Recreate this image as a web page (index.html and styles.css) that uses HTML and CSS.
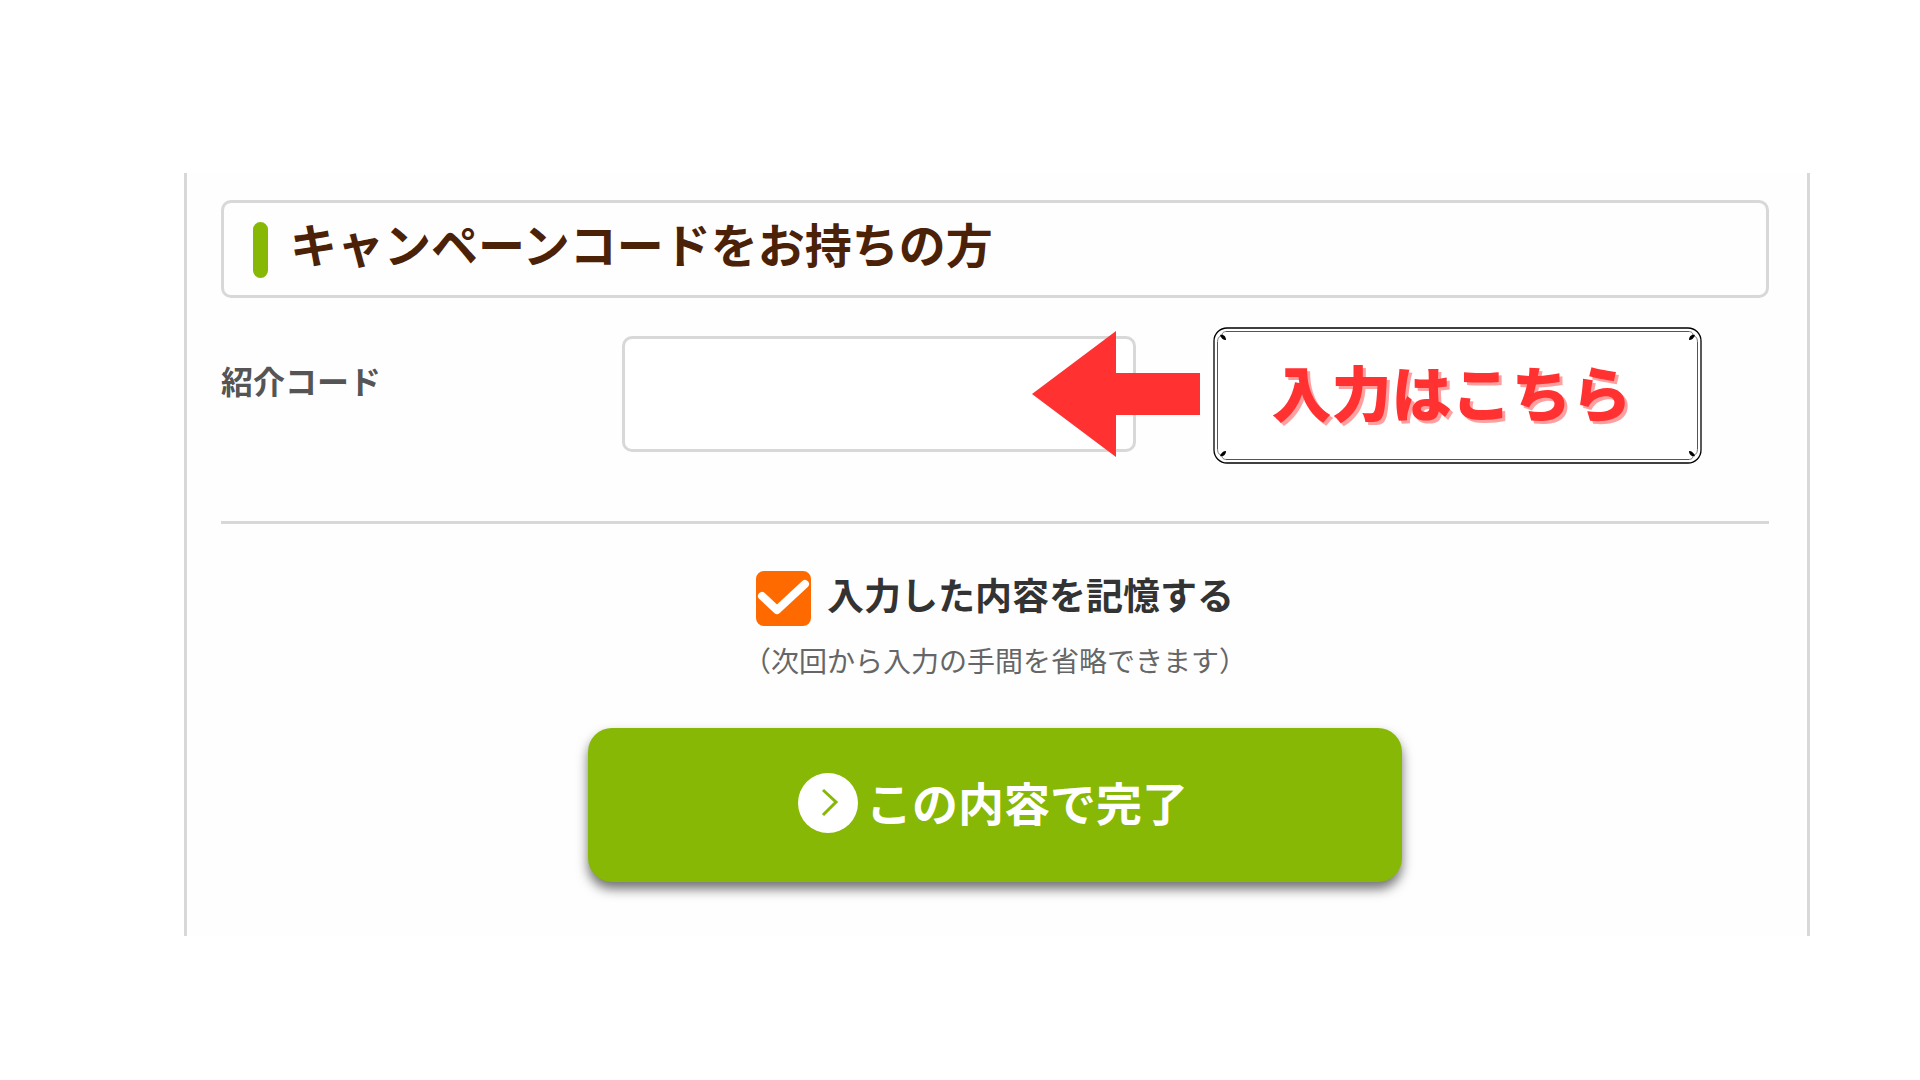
FILE: index.html
```html
<!DOCTYPE html>
<html lang="ja">
<head>
  <meta charset="UTF-8">
  <meta name="viewport" content="width=device-width, initial-scale=1.0">
  <title>キャンペーンコード</title>
  <link rel="stylesheet" href="styles.css">
</head>
<body>
  <form class="panel">
    <h1 class="panel-title">キャンペーンコードをお持ちの方</h1>

    <!-- Referral code -->
    <div class="code-row">
      <label class="code-label" for="code">紹介コード</label>
      <input class="code-input" type="text" id="code" name="code">
      <svg class="arrow" viewBox="0 0 168 126" aria-hidden="true">
        <path d="M0 63 84 0V42H168V84H84V126Z" fill="#ff3131"/>
      </svg>
      <div class="note">
        <svg class="note-frame" viewBox="0 0 489 137" aria-hidden="true">
          <rect x="1" y="1" width="487" height="135" rx="13" fill="#fff" stroke="#000" stroke-width="1.3"/>
          <path d="M13 4.5H476M13 132.5H476M4.5 15V122M484.5 15V122" stroke="#555" fill="none"/>
          <defs>
            <g id="corner">
              <path d="M4.5 16C4.5 11 6 9 9 9M14 4.5C10 4.5 9 6 9 9" fill="none" stroke="#555" stroke-width=".8"/>
              <path d="M7 8C11 7 13 10 13 13C10 13 8 11 7 8Z" fill="#000"/>
            </g>
          </defs>
          <use href="#corner"/>
          <use href="#corner" transform="translate(489 0) scale(-1 1)"/>
          <use href="#corner" transform="translate(0 137) scale(1 -1)"/>
          <use href="#corner" transform="translate(489 137) scale(-1 -1)"/>
        </svg>
        <span class="note-text">入力はこちら</span>
      </div>
    </div>

    <!-- Remember and submit -->
    <div class="actions">
      <label class="remember" for="remember">
        <span class="check">
          <input type="checkbox" id="remember" name="remember" checked>
          <svg viewBox="0 0 55 55" aria-hidden="true">
            <path d="M6 25 21 39 49 13" fill="none" stroke="#fff" stroke-width="8" stroke-linecap="round" stroke-linejoin="round"/>
          </svg>
        </span>
        <span class="remember-text">入力した内容を記憶する</span>
      </label>
      <p class="hint">（次回から入力の手間を省略できます）</p>
      <button class="submit" type="submit">
        <svg viewBox="0 0 60 60" aria-hidden="true">
          <circle cx="30" cy="30" r="30" fill="#fff"/>
          <path d="M25 17 38 29 25 42" fill="none" stroke="#86b805" stroke-width="3"/>
        </svg>
        <span class="submit-text">この内容で完了</span>
      </button>
    </div>
  </form>
</body>
</html>
```
FILE: styles.css
```css
* {
  box-sizing: border-box;
}
body {
  margin: 0;
  padding: 173px 110px 0 184px;
  font-family: "Noto Sans CJK JP", sans-serif;
  background-color: #fff;
}
.panel {
  padding: 27px 38px 54px 34px;
  border: solid #d8d8d8;
  border-width: 0 3px;
  background-color: #fefefe;
}
.panel-title {
  display: flex;
  align-items: center;
  gap: 22px;
  margin: 0;
  padding: 0 29px 12px;
  height: 98px;
  border: 3px solid #d8d8d8;
  border-radius: 10px;
  font-size: 47px;
  font-weight: 700;
  line-height: 56px;
  color: #4b2208;
}
.panel-title::before {
  content: "";
  width: 15px;
  height: 56px;
  margin-top: 14px;
  border-radius: 8px;
  background-color: #86b805;
}
.code-row {
  display: flex;
  align-items: center;
  margin-top: 29px;
  padding-bottom: 57px;
  border-bottom: 3px solid #d8d8d8;
}
.code-label {
  width: 401px;
  padding-bottom: 32px;
  font-size: 32px;
  font-weight: 700;
  line-height: 40px;
  color: #555;
}
.code-input {
  width: 514px;
  height: 116px;
  margin-bottom: 4px;
  padding: 0 24px;
  border: 3px solid #d8d8d8;
  border-radius: 10px;
  font-size: 32px;
  background-color: #fff;
}
/* The arrow points into the text box */
.arrow {
  flex: none;
  width: 168px;
  margin-bottom: 4px;
  margin-left: -104px;
  z-index: 1;
}
.note {
  display: grid;
  flex: none;
  place-items: center;
  width: 489px;
  margin-left: 13px;
}
.note-frame,
.note-text {
  grid-area: 1 / 1;
}
.note-frame {
  width: 100%;
}
.note-text {
  padding: 0 12px 10px 0;
  font-size: 60px;
  font-weight: 900;
  line-height: 72px;
  color: #ff3131;
  text-shadow: 3px 3px 0 #ff9f9f;
}
.actions {
  display: flex;
  flex-direction: column;
  align-items: center;
  padding-top: 47px;
}
.remember {
  display: flex;
  align-items: center;
  gap: 16px;
  cursor: pointer;
}
.remember-text {
  padding-bottom: 10px;
  font-size: 37px;
  font-weight: 700;
  line-height: 44px;
  color: #333;
}
.check {
  display: grid;
  width: 55px;
  height: 55px;
}
.check input,
.check svg {
  grid-area: 1 / 1;
  width: 55px;
  height: 55px;
  margin: 0;
}
.check input {
  appearance: none;
  border: 3px solid #ff6a00;
  border-radius: 8px;
}
.check input:checked {
  background-color: #ff6a00;
}
.check svg {
  z-index: 1;
  pointer-events: none;
}
.check input:not(:checked) + svg {
  visibility: hidden;
}
.hint {
  margin: 14px 0 48px;
  font-size: 28px;
  line-height: 40px;
  color: #666;
}
.submit {
  display: flex;
  align-items: center;
  justify-content: center;
  gap: 8px;
  width: 814px;
  max-width: 100%;
  height: 154px;
  padding: 0 4px 4px 0;
  border: none;
  border-radius: 24px;
  background-color: #86b805;
  box-shadow: 0 7px 12px rgba(0, 0, 0, 0.55);
  font-family: inherit;
  font-size: 46px;
  font-weight: 700;
  line-height: 56px;
  color: #fff;
  cursor: pointer;
}
.submit svg {
  width: 60px;
  height: 60px;
}
.submit-text {
  padding-bottom: 4px;
}
```
